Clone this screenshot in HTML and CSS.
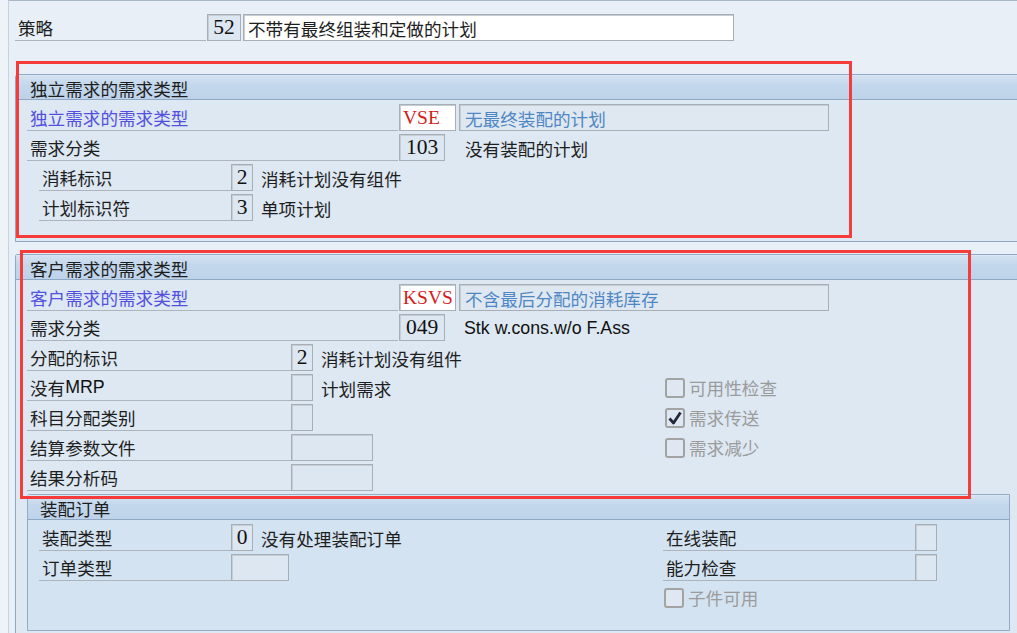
FILE: index.html
```html
<!DOCTYPE html>
<html lang="zh">
<head>
<meta charset="utf-8">
<title>策略</title>
<link rel="stylesheet" href="styles.css">
</head>
<body>
<div class="screen">
  <div class="row top-row">
    <span class="lbl w-top">策略</span>
    <span class="fld num w34">52</span>
    <span class="fld white txtfld w491">不带有最终组装和定做的计划</span>
  </div>

  <section class="group g1">
    <div class="ghead">独立需求的需求类型</div>
    <div class="gbody">
      <div class="row">
        <span class="lbl w371 blue">独立需求的需求类型</span>
        <span class="fld white code w57">VSE</span>
        <span class="fld desc w370">无最终装配的计划</span>
      </div>
      <div class="row">
        <span class="lbl w371">需求分类</span>
        <span class="fld num w46">103</span>
        <span class="txt ml20">没有装配的计划</span>
      </div>
      <div class="row">
        <span class="lbl w192 sub">消耗标识</span>
        <span class="fld num w22">2</span>
        <span class="txt ml8">消耗计划没有组件</span>
      </div>
      <div class="row">
        <span class="lbl w192 sub">计划标识符</span>
        <span class="fld num w22">3</span>
        <span class="txt ml8">单项计划</span>
      </div>
    </div>
  </section>

  <section class="group g2">
    <div class="ghead">客户需求的需求类型</div>
    <div class="gbody">
      <div class="row">
        <span class="lbl w371 blue">客户需求的需求类型</span>
        <span class="fld white code w57">KSVS</span>
        <span class="fld desc w370">不含最后分配的消耗库存</span>
      </div>
      <div class="row">
        <span class="lbl w371">需求分类</span>
        <span class="fld num w46">049</span>
        <span class="txt ml19 latin">Stk w.cons.w/o F.Ass</span>
      </div>
      <div class="row">
        <div class="left l637">
          <span class="lbl w264">分配的标识</span>
          <span class="fld num w22">2</span>
          <span class="txt ml8">消耗计划没有组件</span>
        </div>
      </div>
      <div class="row">
        <div class="left l637">
          <span class="lbl w264">没有<span class="latin">MRP</span></span>
          <span class="fld num w22"></span>
          <span class="txt ml8">计划需求</span>
        </div>
        <label class="chk"><span class="box"></span>可用性检查</label>
      </div>
      <div class="row">
        <div class="left l637">
          <span class="lbl w264">科目分配类别</span>
          <span class="fld num w22"></span>
        </div>
        <label class="chk"><span class="box"><svg viewBox="0 0 16 16" width="16" height="16"><path d="M2.5 8.5 L6.5 13 L13.5 2.5" fill="none" stroke="#26263a" stroke-width="2.8" stroke-linejoin="round"/></svg></span>需求传送</label>
      </div>
      <div class="row">
        <div class="left l637">
          <span class="lbl w264">结算参数文件</span>
          <span class="fld num w82"></span>
        </div>
        <label class="chk"><span class="box"></span>需求减少</label>
      </div>
      <div class="row">
        <div class="left l637">
          <span class="lbl w264">结果分析码</span>
          <span class="fld num w82"></span>
        </div>
      </div>

      <section class="group g3">
        <div class="ghead">装配订单</div>
        <div class="gbody">
          <div class="row">
            <div class="left l624">
              <span class="lbl w192">装配类型</span>
              <span class="fld num w22">0</span>
              <span class="txt ml8">没有处理装配订单</span>
            </div>
            <span class="lbl w252">在线装配</span>
            <span class="fld num w22"></span>
          </div>
          <div class="row">
            <div class="left l624">
              <span class="lbl w192">订单类型</span>
              <span class="fld num w58"></span>
            </div>
            <span class="lbl w252">能力检查</span>
            <span class="fld num w22"></span>
          </div>
          <div class="row">
            <div class="left l624"></div>
            <label class="chk"><span class="box"></span>子件可用</label>
          </div>
        </div>
      </section>
    </div>
  </section>
</div>

<div class="mark mark1"></div>
<div class="mark mark2"></div>
</body>
</html>
```

FILE: styles.css
```css
* { box-sizing: border-box; }

html, body { margin: 0; padding: 0; }

body {
  width: 1017px;
  height: 633px;
  overflow: hidden;
  position: relative;
  background: #eef3f9;
  font-family: "Noto Sans CJK SC", "Noto Sans CJK TC", sans-serif;
  font-size: 17.6px;
  color: #1e1e1e;
}

.screen {
  margin-left: 8px;
  height: 633px;
  overflow: hidden;
  border-left: 1px solid #c9d3de;
  border-top: 1px solid #a9b8c9;
  background: #e8eff7;
  padding-top: 13px;
}

.row {
  display: flex;
  align-items: stretch;
  height: 27px;
  margin-bottom: 3px;
}

.top-row { margin-left: 6px; margin-bottom: 0; }

.left { display: flex; align-items: stretch; flex: none; }
.l637 { width: 637px; }
.l624 { width: 624px; }

.lbl {
  display: flex;
  align-items: center;
  flex: none;
  padding: 2px 0 0 3px;
  line-height: 1;
  white-space: nowrap;
  border-bottom: 1px solid #adb4bc;
}
.lbl.sub { margin-left: 12px; }
.blue { color: #5450df; }

.w-top { width: 191px; margin-right: 1px; }
.w371 { width: 371px; margin-right: 1px; }
.w264 { width: 264px; }
.w192 { width: 192px; }
.w252 { width: 252px; }

.fld {
  display: flex;
  align-items: center;
  justify-content: center;
  flex: none;
  height: 27px;
  border: 1px solid #a6aeb6;
  box-shadow: inset 1px 1px 0 #c6cdd5;
  background: #dde7f1;
  font-family: "Liberation Serif", "Noto Sans CJK SC", serif;
  font-size: 21.5px;
  line-height: 1;
  color: #111;
  white-space: nowrap;
  overflow: hidden;
}
.fld.white { background: #ffffff; }
.fld.code {
  justify-content: flex-start;
  padding-left: 3px;
  font-size: 19.5px;
  color: #d41c1c;
}
.fld.txtfld, .fld.desc {
  justify-content: flex-start;
  padding: 2px 0 0 4px;
  font-family: "Noto Sans CJK SC", "Noto Sans CJK TC", sans-serif;
  font-size: 17.6px;
}
.fld.desc {
  padding-left: 5px;
  background: #dfe8f1;
  color: #4f87c4;
}
.fld.txtfld { margin-left: 2px; color: #1e1e1e; }

.w22 { width: 22px; }
.w34 { width: 34px; }
.w46 { width: 46px; }
.w57 { width: 57px; margin-right: 3px; }
.w58 { width: 58px; }
.w82 { width: 82px; }
.w370 { width: 370px; }
.w491 { width: 491px; }

.txt {
  display: flex;
  align-items: center;
  padding-top: 2px;
  line-height: 1;
  white-space: nowrap;
}
.ml8 { margin-left: 8px; }
.ml19 { margin-left: 19px; }
.ml20 { margin-left: 20px; }

.latin {
  font-family: "Liberation Sans", "Noto Sans", sans-serif;
  font-size: 17.8px;
  color: #111;
}

.group {
  border: 1px solid #8fa8c4;
  border-radius: 3px 0 0 0;
  background: #dde8f3;
}
.g1 { margin: 33px -40px 0 6px; }
.g1 > .gbody { padding-bottom: 17px; }
.g2 { margin: 12px -40px 0 6px; border-bottom: none; }
.g2 > .gbody { padding-bottom: 2px; }
.g3 {
  width: 983px;
  margin: 0;
  background: #d4e3f1;
  border-color: #93abc6;
}

.ghead {
  display: flex;
  align-items: center;
  height: 25px;
  padding: 2px 0 0 14px;
  line-height: 1;
  background: linear-gradient(#d2e1f1, #c3d7ec 40%, #bed3ea);
  border-bottom: 1px solid #8fa8c4;
  border-top: 1px solid #dbe7f4;
}
.g3 .ghead { padding-left: 12px; }

.gbody { padding: 4px 0 14px 11px; }
.g3 > .gbody { padding: 4px 0 16px 11px; }

.chk {
  display: flex;
  align-items: center;
  margin-left: 1px;
  padding-top: 1px;
  color: #9b9b9b;
  line-height: 1;
  white-space: nowrap;
}
.box {
  display: flex;
  align-items: center;
  justify-content: center;
  width: 20px;
  height: 20px;
  margin-right: 4px;
  border: 2px solid #a3a3a3;
  border-radius: 3px;
  background: #dfe8f2;
}

.mark {
  position: absolute;
  border: 3px solid #f63b3b;
  pointer-events: none;
}
.mark1 { left: 16px; top: 61px; width: 836px; height: 177px; }
.mark2 { left: 20px; top: 250px; width: 951px; height: 249px; }
```
